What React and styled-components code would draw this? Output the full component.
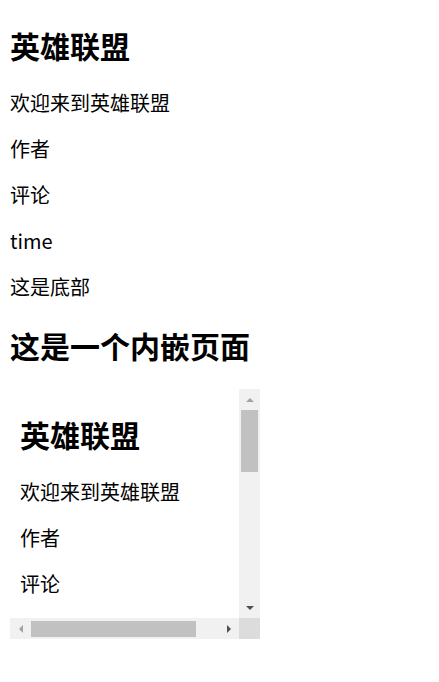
import React from 'react';
import styled, { createGlobalStyle, css } from 'styled-components';

const GlobalStyle = createGlobalStyle`
    body {
        margin: 0 10px 10px 10px;
        background: #fff;
        color: #000;
        font-family: "Noto Sans CJK SC", "Microsoft YaHei", sans-serif;
    }
`;

const Page = styled.div`
    padding-top: 0.1px;
`;

const Title = styled.h2`
    margin: 25px 0;
    font-size: 30px;
    line-height: 40px;
    font-weight: bold;
`;

const Line = styled.p`
    margin: 20px 0;
    font-size: 20px;
    line-height: 26px;
`;

// the embedded page: view + drawn scrollbars (headless shots hide real ones)
const Frame = styled.div`
    display: grid;
    grid-template-columns: 229px 21px;
    grid-template-rows: 229px 21px;
    width: 250px;
    height: 250px;
    margin-top: -1px;
    background: #fff;
`;

const FrameView = styled.div`
    overflow: hidden;
`;

const FrameBody = styled.div`
    width: 250px;
    padding-left: 10px;
`;

const NestedFrame = styled.div`
    width: 250px;
    height: 250px;
`;

const Bar = styled.div`
    display: flex;
    flex-direction: ${(p) => (p.$vertical ? 'column' : 'row')};
    background: #f1f1f1;
`;

const BarButton = styled.div`
    flex: 0 0 21px;
    display: flex;
    align-items: center;
    justify-content: center;
`;

const arrows = {
    up: css`
        border-left: 4px solid transparent;
        border-right: 4px solid transparent;
        border-bottom: 4px solid ${(p) => p.$color};
    `,
    down: css`
        border-left: 4px solid transparent;
        border-right: 4px solid transparent;
        border-top: 4px solid ${(p) => p.$color};
    `,
    left: css`
        border-top: 4px solid transparent;
        border-bottom: 4px solid transparent;
        border-right: 4px solid ${(p) => p.$color};
    `,
    right: css`
        border-top: 4px solid transparent;
        border-bottom: 4px solid transparent;
        border-left: 4px solid ${(p) => p.$color};
    `,
};

const Arrow = styled.span`
    width: 0;
    height: 0;
    ${(p) => arrows[p.$dir]}
`;

const Track = styled.div`
    flex: 1;
    display: flex;
    flex-direction: ${(p) => (p.$vertical ? 'column' : 'row')};
    padding: ${(p) => (p.$vertical ? '0 2px' : '3px 0 2px')};
`;

const Thumb = styled.div`
    flex: 0 0 ${(p) => p.$size}px;
    background: #c1c1c1;
`;

const Corner = styled.div`
    background: #dcdcdc;
`;

const Article = () => (
    <>
        <Title>英雄联盟</Title>
        <Line>欢迎来到英雄联盟</Line>
        <Line>作者</Line>
        <Line>评论</Line>
        <Line>time</Line>
        <Line>这是底部</Line>
    </>
);

const App = () => (
    <Page>
        <GlobalStyle />
        <Article />
        <Title>这是一个内嵌页面</Title>
        <Frame>
            <FrameView>
                <FrameBody>
                    <Article />
                    <Title>这是一个内嵌页面</Title>
                    <NestedFrame />
                </FrameBody>
            </FrameView>
            <Bar $vertical>
                <BarButton>
                    <Arrow $dir="up" $color="#a3a3a3" />
                </BarButton>
                <Track $vertical>
                    <Thumb $size={62} />
                </Track>
                <BarButton>
                    <Arrow $dir="down" $color="#505050" />
                </BarButton>
            </Bar>
            <Bar>
                <BarButton>
                    <Arrow $dir="left" $color="#a3a3a3" />
                </BarButton>
                <Track>
                    <Thumb $size={165} />
                </Track>
                <BarButton>
                    <Arrow $dir="right" $color="#505050" />
                </BarButton>
            </Bar>
            <Corner />
        </Frame>
    </Page>
);

export default App;
